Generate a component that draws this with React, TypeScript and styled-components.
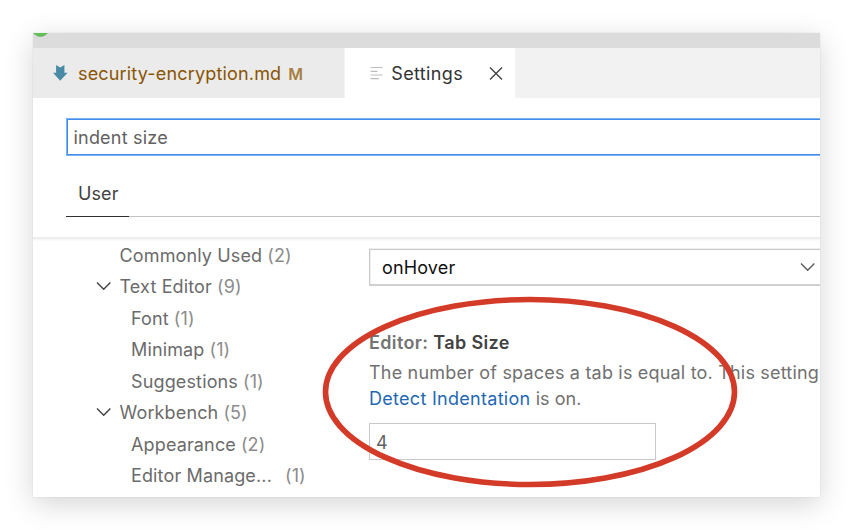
import React from 'react';
import styled, { createGlobalStyle } from 'styled-components';

const GlobalStyle = createGlobalStyle`
  * { box-sizing: border-box; }
  body {
    margin: 0;
    background: #fff;
    overflow: hidden;
    font-family: Inter, "Liberation Sans", sans-serif;
  }
`;

const Stage = styled.main`
  width: 854px;
  height: 530px;
  padding: 33px 34px 33px 33px;
`;

const Window = styled.section`
  position: relative;
  width: 787px;
  height: 464px;
  background: #fff;
  box-shadow: 0 0 1px rgba(0, 0, 0, 0.14), 0 7px 27px rgba(0, 0, 0, 0.17);
`;

const Clip = styled.div`
  display: flex;
  flex-direction: column;
  height: 100%;
  overflow: hidden;
`;

const TitleBar = styled.header`
  flex: none;
  height: 15px;
  background: #dcdcdc;
`;

const TrafficLight = styled.svg`
  display: block;
`;

const TabBar = styled.nav`
  flex: none;
  display: flex;
  height: 50px;
  background: #f2f2f2;
`;

const Tab = styled.div<{ $active?: boolean; $width: number }>`
  display: flex;
  align-items: center;
  width: ${(p) => p.$width}px;
  padding-left: ${(p) => (p.$active ? 25 : 20)}px;
  background: ${(p) => (p.$active ? '#fff' : '#ebebeb')};
  border-right: 1px solid #f3f3f3;
`;

const Label = styled.span<{ $color: string; $gap?: number; $spacing?: number; $size?: number; $weight?: number }>`
  margin-left: ${(p) => p.$gap ?? 0}px;
  padding-top: 2px;
  font-size: ${(p) => p.$size ?? 18}px;
  font-weight: ${(p) => p.$weight ?? 400};
  line-height: 24px;
  letter-spacing: ${(p) => p.$spacing ?? 0}px;
  white-space: pre;
  color: ${(p) => p.$color};
`;

const Icon = styled.svg<{ $gap?: number }>`
  flex: none;
  display: block;
  margin-left: ${(p) => p.$gap ?? 0}px;
`;

const SettingsHeader = styled.div`
  flex: none;
  height: 139px;
  padding: 20px 0 0 33px;
`;

const SearchBox = styled.div`
  display: flex;
  align-items: center;
  height: 38px;
  padding-left: 6.5px;
  border: 1px solid #7db4f3;
  border-right: 0;
  box-shadow: inset 1px 1px #3f8cec, inset 0 -1px #3f8cec;
`;

const ScopeBar = styled.div`
  display: flex;
  height: 61px;
  border-bottom: 1px solid #c3c3c3;
`;

const Scope = styled.div`
  display: flex;
  align-items: center;
  width: 63px;
  height: 61px;
  padding: 13px 0 0 12px;
  border-bottom: 1px solid #303030;
`;

const Body = styled.div`
  flex: 1;
  display: flex;
  min-height: 0;
  background: linear-gradient(#ededed 0 1px, #efefef 1px 2px, #f6f6f6 2px 3px, #fbfbfb 3px 4px, #fff 4px);
`;

const Tree = styled.div`
  flex: none;
  width: 336px;
  padding-top: 2.2px;
`;

const TreeRow = styled.div<{ $child?: boolean }>`
  display: flex;
  align-items: center;
  height: 31.45px;
  padding-left: ${(p) => (p.$child ? 98 : 63)}px;
`;

const Twisty = styled.span`
  flex: none;
  width: 23.5px;
`;

const Details = styled.div`
  flex: 1;
  min-width: 0;
  padding-top: 12px;
`;

const Select = styled.div`
  display: flex;
  align-items: center;
  justify-content: space-between;
  height: 37px;
  padding: 0 4px 0 12px;
  border: 1px solid #cacaca;
  border-right: 0;
  border-bottom-width: 2px;
  border-bottom-color: #d0d0d0;
  box-shadow: inset 1px 0 #eee, 0 -1px #eee;
`;

const SettingTitle = styled.h3`
  display: flex;
  margin: 43px 0 0;
`;

const Description = styled.p`
  display: flex;
  flex-direction: column;
  margin: 4px 0 0;
`;

const DescriptionLine = styled.span`
  display: flex;
  height: 26px;
  align-items: center;
`;

const NumberInput = styled.div`
  display: flex;
  align-items: center;
  width: 287px;
  height: 37px;
  margin-top: 12px;
  padding-left: 6px;
  border: 1px solid #c8c8c8;
`;

const Highlight = styled.svg`
  position: absolute;
  left: 289px;
  top: 263px;
`;

type Entry = { label: string; count: number; child?: boolean; open?: boolean; gap?: number };

const entries: Entry[] = [
  { label: 'Commonly Used', count: 2 },
  { label: 'Text Editor', count: 9, open: true },
  { label: 'Font', count: 1, child: true },
  { label: 'Minimap', count: 1, child: true },
  { label: 'Suggestions', count: 1, child: true },
  { label: 'Workbench', count: 5, open: true },
  { label: 'Appearance', count: 2, child: true },
  { label: 'Editor Manage...', count: 1, child: true, gap: 13 },
];

const Chevron = ({ color = '#424242' }: { color?: string }) => (
  <Icon width="16" height="10" viewBox="0 0 16 10" fill="none" stroke={color} strokeWidth="1.4">
    <path d="M1 1.5 7.7 8.2 14.4 1.5" />
  </Icon>
);

export default function App() {
  return (
    <>
      <GlobalStyle />
      <Stage>
        <Window>
          <Clip>
            <TitleBar>
              <TrafficLight width="16" height="4" viewBox="0 0 16 4">
                <circle cx="7.5" cy="-5.3" r="8.7" fill="#61c454" stroke="#55aa4a" strokeWidth="0.7" />
              </TrafficLight>
            </TitleBar>
            <TabBar>
              <Tab $width={312}>
                <Icon width="15" height="17" viewBox="0 0 15 17">
                  <path d="M3.1 0 7.2 2.6 11.4 0V7.7H14.6L7.2 15.8 0 7.7H3.1Z" fill="#498ba7" />
                </Icon>
                <Label $color="#895503" $gap={10} $spacing={0.17}>security-encryption.md</Label>
                <Label $color="#a77f43" $gap={7} $size={16} $weight={600}>M</Label>
              </Tab>
              <Tab $active $width={171}>
                <Icon width="13" height="14" viewBox="0 0 13 14" stroke="#bdbdbd" strokeWidth="1.2">
                  <path d="M.5 1.5H12.5M.5 5.3H7.5M.5 9H12.5M.5 12.7H9" />
                </Icon>
                <Label $color="#333" $gap={8.3} $spacing={0.35}>Settings</Label>
                <Icon $gap={26} width="14" height="16" viewBox="0 -1 14 16" stroke="#424242" strokeWidth="1.4">
                  <path d="M1 1.5 13 13.5M13 1.5 1 13.5" />
                </Icon>
              </Tab>
            </TabBar>
            <SettingsHeader>
              <SearchBox>
                <Label $color="#616161" $spacing={0.2}>indent size</Label>
              </SearchBox>
              <ScopeBar>
                <Scope>
                  <Label $color="#424242" $spacing={0.1}>User</Label>
                </Scope>
              </ScopeBar>
            </SettingsHeader>
            <Body>
              <Tree>
                {entries.map((e) => (
                  <TreeRow key={e.label} $child={e.child}>
                    {!e.child && <Twisty>{e.open && <Chevron />}</Twisty>}
                    <Label $color="#6b6b6b" $spacing={0.14}>{e.label}</Label>
                    <Label $color="#8c8c8c" $gap={e.gap ?? 5} $spacing={0.1}>{`(${e.count})`}</Label>
                  </TreeRow>
                ))}
              </Tree>
              <Details>
                <Select>
                  <Label $color="#111" $spacing={0.15}>onHover</Label>
                  <Chevron color="#5c5c5c" />
                </Select>
                <SettingTitle>
                  <Label $color="#737373" $weight={600} $spacing={0.36}>Editor: </Label>
                  <Label $color="#424242" $weight={600} $spacing={0.36}>Tab Size</Label>
                </SettingTitle>
                <Description>
                  <DescriptionLine>
                    <Label $color="#717171" $spacing={0.19}>The number of spaces a tab is equal to. This setting</Label>
                  </DescriptionLine>
                  <DescriptionLine>
                    <Label $color="#1f69b3" $spacing={0.29}>Detect Indentation</Label>
                    <Label $color="#717171" $spacing={0.05}> is on.</Label>
                  </DescriptionLine>
                </Description>
                <NumberInput>
                  <Label $color="#616161">4</Label>
                </NumberInput>
              </Details>
            </Body>
          </Clip>
          <Highlight width="416" height="192" viewBox="0 0 416 192" fill="none">
            <ellipse cx="208" cy="96" rx="204.5" ry="92.5" stroke="#d33a27" strokeWidth="5.6" />
          </Highlight>
        </Window>
      </Stage>
    </>
  );
}
